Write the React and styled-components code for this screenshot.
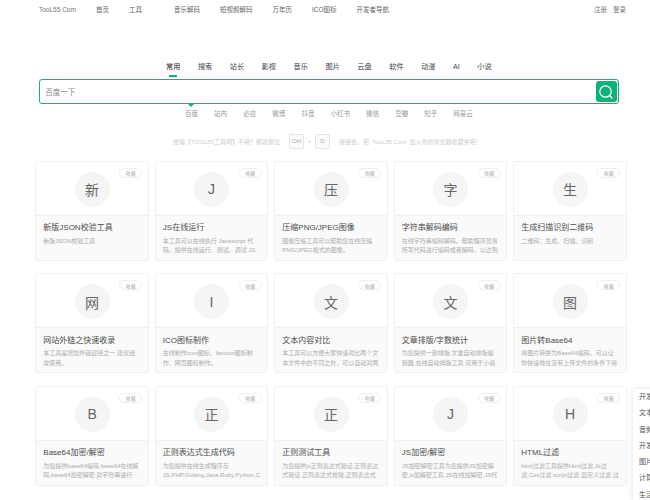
import React from "react";
import styled, { createGlobalStyle } from "styled-components";

const GlobalStyle = createGlobalStyle`
  html, body {
    margin: 0;
    padding: 0;
    background: #fff;
    overflow: hidden;
  }
  body {
    font-family: "Liberation Sans", "Noto Sans CJK SC", sans-serif;
    color: #555;
  }
  * {
    box-sizing: border-box;
  }
`;

const Page = styled.div`
  position: relative;
  width: 650px;
  height: 500px;
  overflow: hidden;
`;

const Header = styled.header`
  display: flex;
  align-items: center;
  height: 18px;
  padding: 0 24px 0 39px;
  font-size: 6.5px;
  color: #666;
`;

const Brand = styled.span`
  width: 57px;
  color: #777;
`;

const NavItem = styled.span`
  margin-right: ${(p) => p.$gap || 20}px;
  white-space: nowrap;
`;

const HeaderRight = styled.div`
  display: flex;
  gap: 6px;
  margin-left: auto;
  color: #777;
`;

const Tabs = styled.div`
  display: flex;
  gap: 17.5px;
  margin-top: 43px;
  padding-left: 166px;
  height: 18px;
  font-size: 7.2px;
  line-height: 12px;
  color: #444;
`;

const Tab = styled.span`
  position: relative;
  color: ${(p) => (p.$active ? "#222" : "#444")};
  &::after {
    content: "";
    display: ${(p) => (p.$active ? "block" : "none")};
    position: absolute;
    left: 3px;
    right: 3px;
    top: 14.3px;
    height: 1.5px;
    background: #0ab27c;
  }
`;

const SearchBox = styled.div`
  position: relative;
  display: flex;
  align-items: center;
  justify-content: space-between;
  width: 579.3px;
  height: 25px;
  margin-left: 39.3px;
  padding: 0 0.5px 0 5px;
  border: 1px solid #0ab27c;
  border-radius: 3px;
  font-size: 7.5px;
  color: #888;
  &::after {
    content: "";
    position: absolute;
    left: 147px;
    bottom: -4px;
    border-left: 4px solid transparent;
    border-right: 4px solid transparent;
    border-top: 4px solid #0ab27c;
  }
`;

const SearchButton = styled.div`
  display: flex;
  align-items: center;
  justify-content: center;
  width: 21.5px;
  height: 21px;
  background: #0ab27c;
  border-radius: 3px;
`;

const Engines = styled.div`
  display: flex;
  gap: 16.1px;
  margin: 5px 0 0 185px;
  height: 12px;
  font-size: 6.5px;
  line-height: 10px;
  color: #999;
`;

const Tip = styled.div`
  display: flex;
  align-items: center;
  height: 16px;
  margin-top: 12px;
  padding-left: 173px;
  font-size: 6px;
  color: #ccc;
  white-space: pre;
`;

const Key = styled.span`
  display: flex;
  align-items: center;
  justify-content: center;
  width: 15px;
  height: 15px;
  margin: ${(p) => p.$margin || "0"};
  border: 1px solid #e4e4e4;
  border-radius: 2px;
  background: #fbfbfb;
  color: #aaa;
`;

const Plus = styled.span`
  width: 11px;
  text-align: center;
`;

const Grid = styled.div`
  display: grid;
  grid-template-columns: repeat(5, 113.5px);
  grid-auto-rows: 100px;
  column-gap: 6px;
  row-gap: 12.5px;
  margin-top: 11.5px;
  padding-left: 35.3px;
`;

const Card = styled.div`
  position: relative;
  display: flex;
  flex-direction: column;
  border: 1px solid #f0f0f0;
  border-radius: 2px;
  overflow: hidden;
`;

const Fav = styled.span`
  position: absolute;
  top: 6px;
  right: 5.6px;
  display: flex;
  align-items: center;
  justify-content: center;
  width: 23px;
  height: 10px;
  border: 1px solid #efefef;
  border-radius: 5px;
  font-size: 5px;
  color: #aaa;
`;

const CardTop = styled.div`
  display: flex;
  justify-content: center;
  flex: none;
  height: 54px;
  padding-top: 10px;
  border-bottom: 1px solid #f0f0f0;
`;

const Avatar = styled.div`
  display: flex;
  align-items: center;
  justify-content: center;
  width: 35px;
  height: 35px;
  border-radius: 50%;
  background: #f5f5f5;
  font-size: 14px;
  color: #666;
`;

const CardBody = styled.div`
  flex: 1;
  padding: 5.5px 7px 0;
  background: #fafafa;
`;

const Title = styled.div`
  font-size: 8px;
  line-height: 13px;
  color: #4a4a4a;
  white-space: nowrap;
`;

const Desc = styled.div`
  height: 19.4px;
  margin-top: 2.5px;
  overflow: hidden;
  font-size: 6px;
  line-height: 9.7px;
  color: #aaa;
  overflow-wrap: anywhere;
`;

const SideMenu = styled.div`
  position: absolute;
  left: 633px;
  top: 389px;
  width: 40px;
  padding: 0 0 0 6px;
  background: #fff;
  box-shadow: 0 0 6px rgba(0, 0, 0, 0.12);
  font-size: 7px;
  line-height: 16.3px;
  color: #555;
  white-space: nowrap;
`;

const navItems = [
  { label: "首页" },
  { label: "工具", gap: 32 },
  { label: "音乐解码" },
  { label: "短视频解码" },
  { label: "万年历" },
  { label: "ICO图标" },
  { label: "开发者导航" },
];

const tabs = ["常用", "搜索", "站长", "影视", "音乐", "图片", "云盘", "软件", "动漫", "AI", "小说"];
const engines = ["百度", "站内", "必应", "微博", "抖音", "小红书", "微信", "豆瓣", "知乎", "网易云"];
const sideItems = ["开发工具", "文本工具", "音频工具", "开发导航", "图片工具", "计算工具", "生活工具"];

const tools = [
  { icon: "新", title: "新版JSON校验工具", desc: "新版JSON校验工具" },
  { icon: "J", title: "JS在线运行", desc: "本工具可以在线执行 Javascript 代码。提供在线运行、测试、调试 JS" },
  { icon: "压", title: "压缩PNG/JPEG图像", desc: "图像压缩工具可以帮助您在线压缩PNG/JPEG格式的图像。" },
  { icon: "字", title: "字符串解码编码", desc: "在线字符串编码解码。帮助程序员将所写代码进行编码或者解码，以达到" },
  { icon: "生", title: "生成扫描识别二维码", desc: "二维码：生成、扫描、识别" },
  { icon: "网", title: "网站外链之快速收录", desc: "本工具是增加外链途径之一,建议经常使用。" },
  { icon: "I", title: "ICO图标制作", desc: "在线制作icon图标、favicon图标制作、网页图标制作。" },
  { icon: "文", title: "文本内容对比", desc: "本工具可以方便大家快速对比两个文本文件中的不同之处，可以自动对两" },
  { icon: "文", title: "文章排版/字数统计", desc: "为您提供一键排版,文章自动排版编辑器,在线自动排版工具,可用于小说," },
  { icon: "图", title: "图片转Base64", desc: "将图片转换为Base64编码，可以让你快速地在没有上传文件的条件下将" },
  { icon: "B", title: "Base64加密/解密", desc: "为您提供base64编码,base64在线解码,base64加密解密,对字符串进行" },
  { icon: "正", title: "正则表达式生成代码", desc: "为您提供在线生成程序与 JS,PHP,Golang,Java,Ruby,Python,C" },
  { icon: "正", title: "正则测试工具", desc: "为您提供js正则表达式验证,正则表达式验证,正则表达式校验,正则表达式" },
  { icon: "J", title: "JS加密/解密", desc: "JS加密解密工具为您提供JS加密解密,js加解密工具,JS在线加解密,JS代" },
  { icon: "H", title: "HTML过滤", desc: "html过滤工具提供Html过滤,Js过滤,Css过滤,script过滤,自定义过滤 过" },
];

const SearchIcon = () => (
  <svg width="16" height="16" viewBox="0 0 16 16" fill="none" stroke="#fff">
    <circle cx="7.5" cy="7.5" r="5.7" strokeWidth="1.2" />
    <path d="M11.6 11.6L14.4 14.4" strokeWidth="1.4" />
  </svg>
);

export default function App() {
  return (
    <Page>
      <GlobalStyle />
      <Header>
        <Brand>TooL55.Com</Brand>
        {navItems.map((item) => (
          <NavItem key={item.label} $gap={item.gap}>
            {item.label}
          </NavItem>
        ))}
        <HeaderRight>
          <span>注册</span>
          <span>登录</span>
        </HeaderRight>
      </Header>
      <Tabs>
        {tabs.map((tab, i) => (
          <Tab key={tab} $active={i === 0}>
            {tab}
          </Tab>
        ))}
      </Tabs>
      <SearchBox>
        <span>百度一下</span>
        <SearchButton>
          <SearchIcon />
        </SearchButton>
      </SearchBox>
      <Engines>
        {engines.map((name) => (
          <span key={name}>{name}</span>
        ))}
      </Engines>
      <Tip>
        <span>觉得【TOOL55工具网】不错？那就按住</span>
        <Key $margin="0 0 0 9px">Ctrl</Key>
        <Plus>+</Plus>
        <Key $margin="0 9px 0 0">D</Key>
        <span>键组合，把  TooL55.Com  加入你的浏览器收藏夹吧！</span>
      </Tip>
      <Grid>
        {tools.map((tool) => (
          <Card key={tool.title}>
            <Fav>收藏</Fav>
            <CardTop>
              <Avatar>{tool.icon}</Avatar>
            </CardTop>
            <CardBody>
              <Title>{tool.title}</Title>
              <Desc>{tool.desc}</Desc>
            </CardBody>
          </Card>
        ))}
      </Grid>
      <SideMenu>
        {sideItems.map((item) => (
          <div key={item}>{item}</div>
        ))}
      </SideMenu>
    </Page>
  );
}
